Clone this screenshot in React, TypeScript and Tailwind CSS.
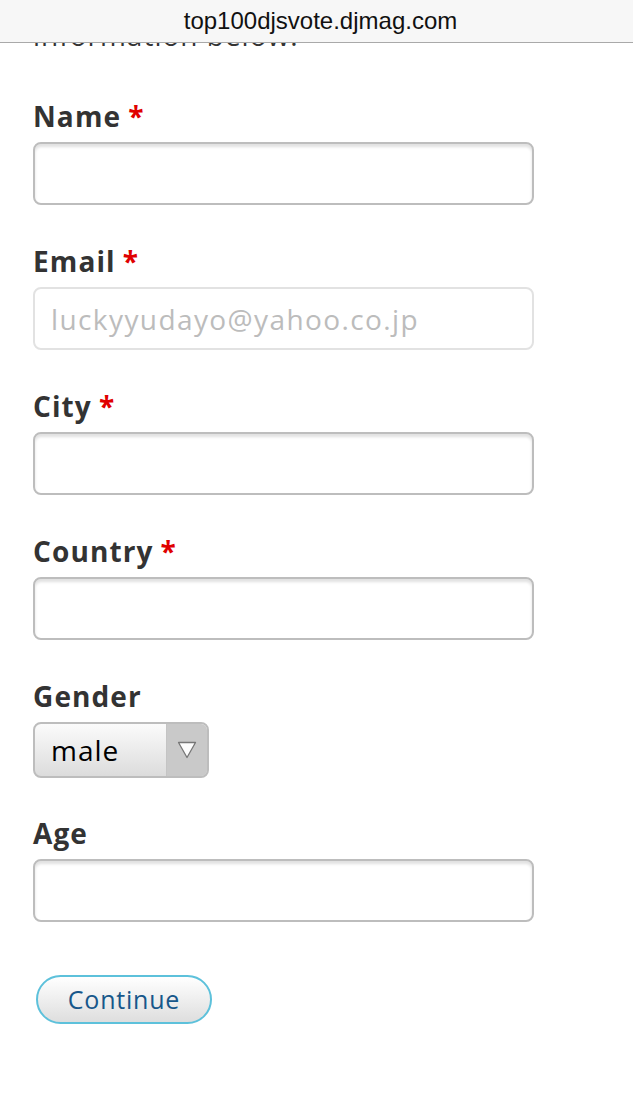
const FONT = { fontFamily: '"Open Sans", "DejaVu Sans", sans-serif' };

function Label({ text, required }: { text: string; required?: boolean }) {
  return (
    <label className="block h-[34px] text-[28px] leading-[34px] font-bold tracking-[1.1px] text-[#333]">
      {text}
      {required && <span className="ml-[7px] text-[#e00000]">*</span>}
    </label>
  );
}

function TextBox({ value, disabled }: { value?: string; disabled?: boolean }) {
  return (
    <input
      readOnly
      value={value ?? ""}
      className={
        disabled
          ? "mt-[9px] block h-[63px] w-[501px] rounded-[8px] border-2 border-[#e2e2e2] bg-white px-[16px] text-[28px] tracking-[1.4px] text-[#bcbcbc] outline-none"
          : "mt-[9px] block h-[63px] w-[501px] rounded-[8px] border-2 border-[#bdbdbd] bg-white px-[16px] text-[28px] text-[#333] shadow-[inset_0_3px_3px_rgba(0,0,0,0.12)] outline-none"
      }
      style={FONT}
    />
  );
}

export default function App() {
  return (
    <div className="relative min-h-[1098px] w-[633px] overflow-hidden bg-white" style={FONT}>
      <div className="absolute inset-x-0 top-0 z-10 flex h-[43px] items-center justify-center border-b border-[#a9a9a9] bg-[#f7f7f7]">
        <span className="pl-[8px] text-[24px] text-[#111]" style={{ fontFamily: '"Liberation Sans", Arial, sans-serif' }}>
          top100djsvote.djmag.com
        </span>
      </div>

      <div className="pl-[33px]">
        <p className="pt-[18px] text-[28px] leading-[34px] tracking-[1px] text-[#333]">information below.</p>

        <div className="mt-[47px]">
          <Label text="Name" required />
          <TextBox />
        </div>

        <div className="mt-[39px]">
          <Label text="Email" required />
          <TextBox value="luckyyudayo@yahoo.co.jp" disabled />
        </div>

        <div className="mt-[39px]">
          <Label text="City" required />
          <TextBox />
        </div>

        <div className="mt-[39px]">
          <Label text="Country" required />
          <TextBox />
        </div>

        <div className="mt-[39px]">
          <Label text="Gender" />
          <div className="mt-[9px] flex h-[56px] w-[176px] overflow-hidden rounded-[8px] border-2 border-[#bdbdbd] bg-gradient-to-b from-[#fbfbfb] to-[#dcdcdc]">
            <span className="flex flex-1 items-center pl-[16px] text-[28px] tracking-[1px] text-black">male</span>
            <span className="flex w-[41px] items-center justify-center border-l border-[#c4c4c4] bg-[#c9c9c9]">
              <svg width="20" height="18" viewBox="0 0 20 18">
                <path d="M1.5 1.5 L18.5 1.5 L10 16.5 Z" fill="#fdfdfd" stroke="#777" strokeWidth="1.3" strokeLinejoin="round" />
              </svg>
            </span>
          </div>
        </div>

        <div className="mt-[38px]">
          <Label text="Age" />
          <TextBox />
        </div>

        <button
          className="mt-[53px] ml-[3px] flex h-[49px] w-[176px] items-center justify-center rounded-full border-2 border-[#5dc1db] bg-gradient-to-b from-white to-[#dedede] text-[25px] tracking-[0.8px] text-[#17578a]"
          style={FONT}
        >
          Continue
        </button>
      </div>
    </div>
  );
}
